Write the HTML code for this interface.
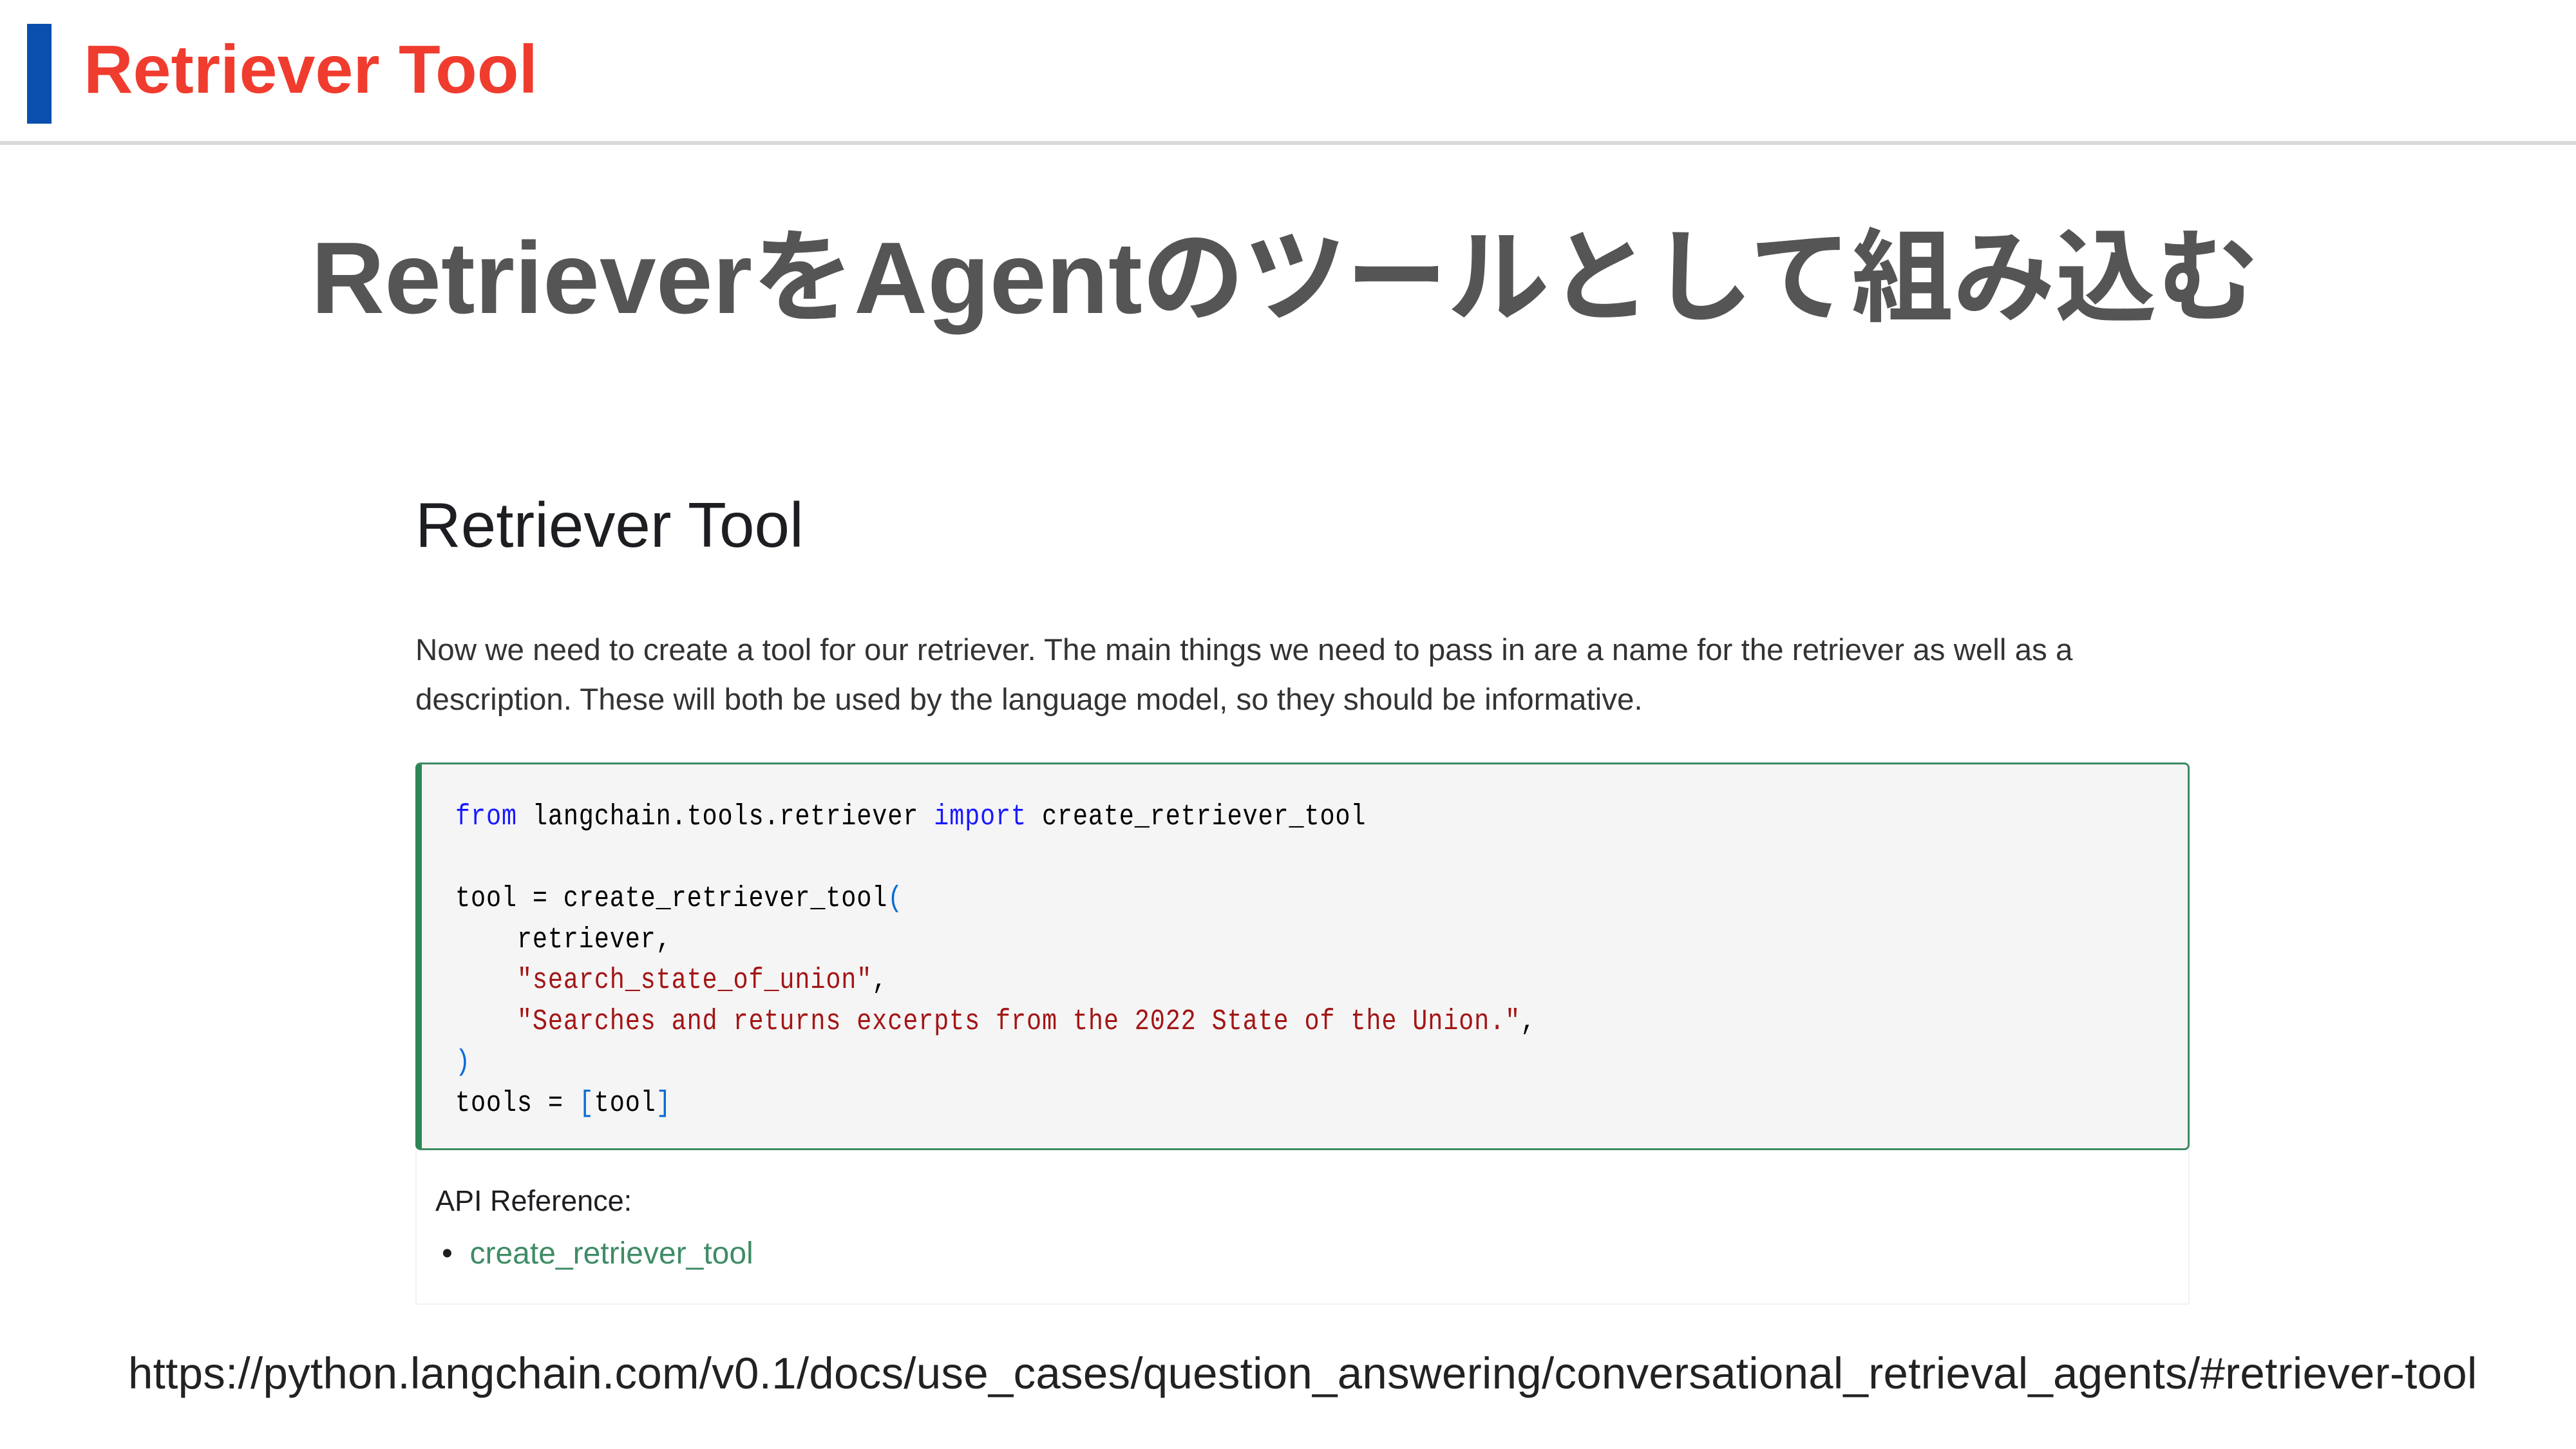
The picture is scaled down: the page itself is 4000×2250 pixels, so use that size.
<!DOCTYPE html>
<html><head><meta charset="utf-8"><style>
*{margin:0;padding:0;box-sizing:border-box}
body{width:4000px;height:2250px;background:#fff;position:relative;overflow:hidden;font-family:"Liberation Sans","Noto Sans CJK JP",sans-serif}
.abs{position:absolute;white-space:nowrap}
#bar{left:42px;top:37px;width:38px;height:155px;background:#0a4fad}
#t1{left:130px;top:38px;font-size:106px;font-weight:bold;color:#f03c2e;line-height:140px}
#line{left:0;top:219px;width:4000px;height:6px;background:#d9d9d9}
#h1{left:0;width:4000px;text-align:center;top:332px;font-size:158px;font-weight:bold;color:#555;line-height:200px;padding-right:10px}
#h2{left:645px;top:755px;font-size:98px;color:#1c1e21;line-height:120px}
.p{left:645px;font-size:47.5px;color:#333;line-height:60px}
#code{left:645px;top:1184px;width:2755px;height:602px;background:#f5f5f5;border:3px solid #3c8a62;border-left:10px solid #2e8555;border-radius:8px}
pre{position:absolute;left:52px;top:50px;font-family:"Liberation Mono",monospace;font-size:45px;line-height:63.5px;color:#000;letter-spacing:1px;transform:scaleX(0.856);transform-origin:0 0}
.k{color:#1a1aff}.s{color:#a31515}.b{color:#0a6bd6}
#api{left:645px;top:1786px;width:2755px;height:240px;border:2px solid #f2f2f2;border-top:none}
#ar{left:676px;top:1835px;font-size:45px;color:#1c1e21;line-height:60px}
#li{left:686px;top:1917px;font-size:48px;color:#3f8c66;line-height:60px}
#url{left:199px;top:2093px;font-size:69px;color:#222;line-height:80px;letter-spacing:0.3px}
</style></head><body>
<div id="bar" class="abs"></div>
<div id="t1" class="abs">Retriever Tool</div>
<div id="line" class="abs"></div>
<div id="h1" class="abs">RetrieverをAgentのツールとして組み込む</div>
<div id="h2" class="abs">Retriever Tool</div>
<div class="abs p" style="top:980px">Now we need to create a tool for our retriever. The main things we need to pass in are a name for the retriever as well as a</div>
<div class="abs p" style="top:1057px">description. These will both be used by the language model, so they should be informative.</div>
<div id="code" class="abs"><pre><span class="k">from</span> langchain.tools.retriever <span class="k">import</span> create_retriever_tool

tool = create_retriever_tool<span class="b">(</span>
    retriever,
    <span class="s">"search_state_of_union"</span>,
    <span class="s">"Searches and returns excerpts from the 2022 State of the Union."</span>,
<span class="b">)</span>
tools = <span class="b">[</span>tool<span class="b">]</span></pre></div>
<div id="api" class="abs"></div>
<div id="ar" class="abs">API Reference:</div>
<div id="li" class="abs"><span style="color:#1c1e21">•</span>&nbsp;&nbsp;create_retriever_tool</div>
<div id="url" class="abs">https://python.langchain.com/v0.1/docs/use_cases/question_answering/conversational_retrieval_agents/#retriever-tool</div>
</body></html>
